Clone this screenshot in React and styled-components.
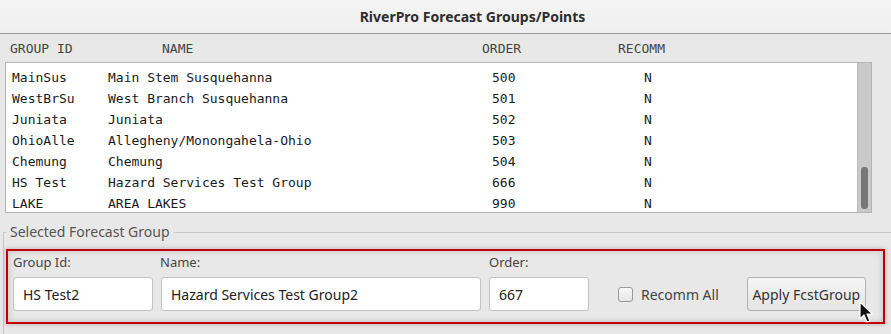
import React from "react";
import styled, { createGlobalStyle } from "styled-components";

const groups = [
  { id: "MainSus", name: "Main Stem Susquehanna", order: 500, recomm: "N" },
  { id: "WestBrSu", name: "West Branch Susquehanna", order: 501, recomm: "N" },
  { id: "Juniata", name: "Juniata", order: 502, recomm: "N" },
  { id: "OhioAlle", name: "Allegheny/Monongahela-Ohio", order: 503, recomm: "N" },
  { id: "Chemung", name: "Chemung", order: 504, recomm: "N" },
  { id: "HS Test", name: "Hazard Services Test Group", order: 666, recomm: "N" },
  { id: "LAKE", name: "AREA LAKES", order: 990, recomm: "N" },
];

const App = () => {
  return (
    <>
      <GlobalStyle />
      <Window>
        <TitleBar>RiverPro Forecast Groups/Points</TitleBar>

        <HeaderRow>
          <span>GROUP ID</span>
          <span>NAME</span>
          <span>ORDER</span>
          <span>RECOMM</span>
        </HeaderRow>

        <ListBox>
          <Rows>
            {groups.map((g) => (
              <Row key={g.id}>
                <span>{g.id}</span>
                <span>{g.name}</span>
                <span>{g.order}</span>
                <span>{g.recomm}</span>
              </Row>
            ))}
          </Rows>
          <ScrollTrack>
            <ScrollThumb />
          </ScrollTrack>
        </ListBox>

        <GroupBox>
          <Legend>Selected Forecast Group</Legend>
          <Highlight>
            <Field $width={140}>
              <Label>Group Id:</Label>
              <Input defaultValue="HS Test2" />
            </Field>
            <Field $width={320}>
              <Label $indent={-1}>Name:</Label>
              <Input defaultValue="Hazard Services Test Group2" />
            </Field>
            <Field $width={100}>
              <Label>Order:</Label>
              <Input defaultValue="667" />
            </Field>
            <CheckRow>
              <CheckBox />
              <span>Recomm All</span>
            </CheckRow>
            <ApplyButton>Apply FcstGroup</ApplyButton>
          </Highlight>
        </GroupBox>

        <Cursor width="18" height="24" viewBox="0 0 18 24">
          <path
            d="M1 1 L1 18 L5 14 L8 21 L11 20 L8 13 L13.5 13 Z"
            fill="#111"
            stroke="#fff"
            strokeWidth="1.2"
            strokeLinejoin="round"
          />
        </Cursor>
      </Window>
    </>
  );
};

export default App;

const GlobalStyle = createGlobalStyle`
  html, body {
    margin: 0;
    padding: 0;
    background: #e8e8e8;
    overflow: hidden;
  }
  body {
    font-family: "Noto Sans", "DejaVu Sans", sans-serif;
  }
`;

const Window = styled.div`
  position: relative;
  width: 891px;
  height: 334px;
  background: #e8e8e8;
  overflow: hidden;
`;

const TitleBar = styled.div`
  height: 34px;
  box-sizing: border-box;
  padding-left: 54px;
  display: flex;
  align-items: center;
  justify-content: center;
  background: linear-gradient(#f4f4f4, #efefef);
  border-bottom: 1px solid #9c9c9c;
  color: #2e2e2e;
  font-size: 14px;
  font-weight: 700;
`;

const mono = `
  font-family: "DejaVu Sans Mono", "Liberation Mono", monospace;
  font-size: 13px;
`;

const HeaderRow = styled.div`
  ${mono};
  height: 28px;
  display: grid;
  grid-template-columns: 152px 320px 136px auto;
  align-items: center;
  padding-left: 10px;
  color: #444;
`;

const ListBox = styled.div`
  display: flex;
  height: 151px;
  box-sizing: border-box;
  margin: 0 19px 0 5px;
  border: 1px solid #b4b4b4;
  background: #fff;
`;

const Rows = styled.div`
  flex: 1;
  padding: 4px 0 0 6px;
`;

const Row = styled.div`
  ${mono};
  display: grid;
  grid-template-columns: 96px 384px 152px auto;
  height: 21px;
  align-items: center;
  color: #1a1a1a;
`;

const ScrollTrack = styled.div`
  width: 13px;
  display: flex;
  flex-direction: column;
  justify-content: flex-end;
  background: #c9c9c9;
  border-left: 1px solid #bcbcbc;
`;

const ScrollThumb = styled.div`
  height: 42px;
  margin: 0 3px 3px 3px;
  border-radius: 3px;
  background: #777;
`;

const GroupBox = styled.fieldset`
  margin: 9px 0 0 3px;
  padding: 0 0 40px 2px;
  border: 1px solid #c6c6c6;
  border-right: none;
  border-bottom: none;
`;

const Legend = styled.legend`
  padding: 0 4px;
  margin-left: 0;
  font-size: 14px;
  line-height: 20px;
  color: #555;
`;

const Highlight = styled.div`
  display: flex;
  align-items: flex-end;
  box-sizing: border-box;
  margin: 7px 6px 0 0;
  height: 75px;
  padding: 0 0 11px 5px;
  border: 2px solid #c40000;
  box-shadow: 0 0 5px rgba(0, 0, 0, 0.25), inset 0 0 6px rgba(0, 0, 0, 0.18);
`;

const Field = styled.div`
  display: flex;
  flex-direction: column;
  width: ${(p) => p.$width}px;
  margin-right: 8px;
`;

const Label = styled.label`
  font-size: 13px;
  line-height: 18px;
  color: #444;
  margin: 0 0 6px ${(p) => p.$indent || 0}px;
`;

const Input = styled.input`
  box-sizing: border-box;
  height: 34px;
  width: 100%;
  padding: 0 9px;
  border: 1px solid #c2c2c2;
  border-radius: 3px;
  background: #fff;
  font-family: "Noto Sans", "DejaVu Sans", sans-serif;
  font-size: 14px;
  color: #222;
  outline: none;
`;

const CheckRow = styled.div`
  display: flex;
  align-items: center;
  gap: 8px;
  height: 34px;
  margin-left: 21px;
  font-size: 14px;
  color: #444;
`;

const CheckBox = styled.span`
  width: 13px;
  height: 13px;
  border: 1px solid #9a9a9a;
  border-radius: 3px;
  background: linear-gradient(#f6f6f6, #e6e6e6);
`;

const ApplyButton = styled.button`
  box-sizing: border-box;
  height: 34px;
  width: 119px;
  margin-left: 28px;
  padding: 0;
  border: 1px solid #b3b3b3;
  border-radius: 3px;
  background: linear-gradient(#f5f5f5, #e5e5e5);
  font-family: "Noto Sans", "DejaVu Sans", sans-serif;
  font-size: 14px;
  color: #333;
`;

const Cursor = styled.svg`
  position: absolute;
  left: 859px;
  top: 301px;
`;
